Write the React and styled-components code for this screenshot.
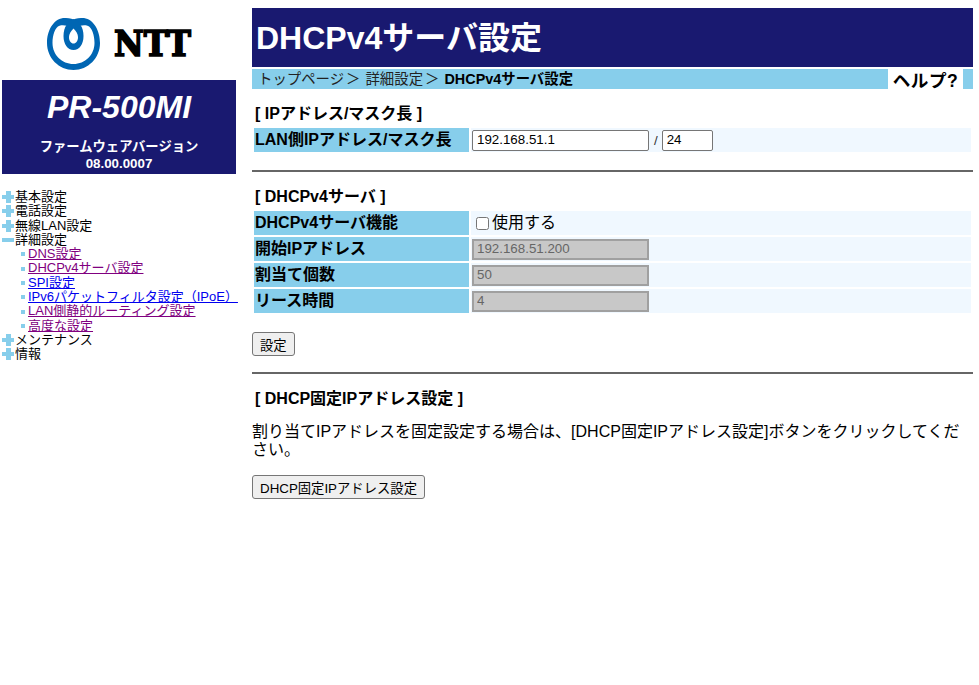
import React from "react";
import styled, { createGlobalStyle } from "styled-components";

const fontStack = `"Liberation Sans", "Noto Sans CJK JP", sans-serif`;

const GlobalStyle = createGlobalStyle`
  html, body {
    margin: 0;
    padding: 0;
    background: #fff;
    font-family: ${fontStack};
    color: #000;
  }
`;

const Page = styled.div`
  display: flex;
  width: 979px;
  min-height: 685px;
  padding-top: 8px;
  box-sizing: border-box;
`;

const Side = styled.aside`
  width: 234px;
  margin-left: 2px;
  flex: none;
`;

const Logo = styled.div`
  height: 72px;
  display: flex;
  align-items: center;
  gap: 13px;
  padding-left: 45px;
`;

const LogoWord = styled.span`
  font-family: "DejaVu Serif", serif;
  font-weight: 900;
  font-size: 32.5px;
  line-height: 1;
  -webkit-text-stroke: 1.6px #000;
  transform: scaleY(1.08);
`;

const ModelBox = styled.div`
  height: 94px;
  background: #191970;
  color: #fff;
  text-align: center;
  font-weight: bold;
`;

const ModelName = styled.div`
  font-size: 32px;
  font-style: italic;
  line-height: 37px;
  padding-top: 9px;
`;

const Firmware = styled.div`
  font-size: 13.33px;
  line-height: 16.5px;
  margin-top: 13px;
`;

const Menu = styled.ul`
  list-style: none;
  margin: 16px 0 0;
  padding: 0;
  font-size: 13px;
  line-height: 14.3px;
`;

const MenuItem = styled.li`
  display: flex;
  align-items: center;
  height: 14.3px;
  white-space: nowrap;
`;

const SubItem = styled(MenuItem)`
  padding-left: 19px;
`;

const Toggle = styled.i`
  position: relative;
  flex: none;
  width: 12px;
  height: 12px;
  margin-right: 1px;

  &::before {
    content: "";
    position: absolute;
    left: 0;
    right: 0;
    top: 4px;
    height: 4px;
    background: #87ceeb;
  }

  &::after {
    content: "";
    display: ${({ $open }) => ($open ? "none" : "block")};
    position: absolute;
    top: 0;
    bottom: 0;
    left: 3.5px;
    width: 5px;
    background: #87ceeb;
  }
`;

const Bullet = styled.i`
  flex: none;
  width: 4px;
  height: 4px;
  margin-right: 3px;
  background: #87ceeb;
`;

const MenuLink = styled.a`
  color: ${({ $visited }) => ($visited ? "#800080" : "#0000ee")};
  text-decoration: underline;
`;

const Main = styled.main`
  width: 721px;
  margin-left: 16px;
  flex: none;
`;

const Title = styled.h1`
  margin: 0;
  height: 59px;
  background: #191970;
  color: #fff;
  font-size: 32px;
  font-weight: bold;
  line-height: 61px;
  padding-left: 4px;
`;

const Crumbs = styled.div`
  display: flex;
  height: 20px;
  margin-top: 2px;
  background: #87ceeb;
  font-size: 14.4px;
  line-height: 20px;
`;

const CrumbText = styled.div`
  flex: 1;
  padding-left: 6px;
  color: #222;

  b {
    color: #000;
  }
`;

const CrumbSep = styled.span`
  margin: 0 5px 0 2px;
`;

const Help = styled.div`
  width: 75px;
  margin-right: 10px;
  background: #fff;
  font-size: 17.6px;
  font-weight: bold;
  text-align: center;
  line-height: 24px;
  letter-spacing: 0.5px;
`;

const SectionTitle = styled.h2`
  height: 20px;
  margin: 14px 0 0;
  padding-left: 3px;
  font-size: 16px;
  font-weight: bold;
  line-height: 22px;
`;

const Rows = styled.div`
  display: flex;
  flex-direction: column;
  gap: 2px;
  margin: 5px 2px 0;
`;

const Row = styled.div`
  display: grid;
  grid-template-columns: 215px 1fr;
  gap: 2px;
  height: 24px;
`;

const Label = styled.div`
  background: #87ceeb;
  padding-left: 1px;
  font-size: 16px;
  font-weight: bold;
  line-height: 23px;
`;

const Value = styled.div`
  display: flex;
  align-items: center;
  background: #f0f8ff;
  padding-left: 1px;
  font-size: 16px;
`;

const TextBox = styled.input`
  box-sizing: border-box;
  width: ${({ $w }) => $w}px;
  height: 21px;
  padding: 0 4px 2px;
  border: 1px solid #767676;
  border-radius: 2px;
  background: #fff;
  color: #000;
  font: 13.33px ${fontStack};
  outline: none;
`;

const DisabledBox = styled(TextBox)`
  width: 177px;
  padding: 0 3px 2px;
  border: 2px solid #a0a0a0;
  border-radius: 0;
  background: #c8c8c8;
  color: #666;
`;

const Slash = styled.span`
  margin: 0 4px 0 5px;
  font-size: 13.33px;
  color: #333;
`;

const CheckLabel = styled.label`
  display: flex;
  align-items: center;
  line-height: 22px;
  margin-top: -1px;
`;

const Check = styled.input`
  width: 13px;
  height: 13px;
  margin: 1px 3px 0 4px;
`;

const Divider = styled.hr`
  margin: ${({ $top }) => $top}px 0 0;
  border: 0;
  height: 2px;
  background: #666;
`;

const Button = styled.button`
  display: block;
  box-sizing: border-box;
  height: 24px;
  margin-top: ${({ $top }) => $top}px;
  padding: 0 7px;
  border: 1px solid #767676;
  border-radius: 3px;
  background: #efefef;
  color: #000;
  font: 13.33px ${fontStack};
`;

const Note = styled.p`
  margin: 15px 0 0;
  font-size: 16px;
  line-height: 18px;
`;

const NttMark = () => (
  <svg width="54" height="52" viewBox="0 0 54 52" aria-hidden="true">
    <path
      fill="#0066b3"
      d="M26.5 1.5C24 0 20 0 16 0 6 1.5 0 13 0 25c0 15 12 27 26.5 27S53 40 53 25C53 13 47 1.5 37 0c-4 0-8 0-10.5 1.5z"
    />
    <path
      fill="#fff"
      d="M12.5 7.7C8 9 5.5 17 5.5 25c0 12 9.5 21 21 21s21-9 21-21c0-8-2.500-16-7-17.300C37 7 34 7 26.500 10 19 7 16 7 12.500 7.700z"
    />
    <path
      fill="#0066b3"
      d="M26.5 1C21 3 16.5 9 16.500 18c0 8 4 14 10 14s10-6 10-14C36.500 9 32 3 26.500 1z"
    />
    <path
      fill="#fff"
      d="M26.5 10.5C24 13 22 16 22 19c0 4 2 6.500 4.500 6.500S31 23 31 19c0-3-2-6-4.500-8.500z"
    />
  </svg>
);

const topItem = (label, open) => (
  <MenuItem key={label}>
    <Toggle $open={open} />
    {label}
  </MenuItem>
);

const subItem = (label, visited) => (
  <SubItem key={label}>
    <Bullet />
    <MenuLink href="#" $visited={visited}>
      {label}
    </MenuLink>
  </SubItem>
);

const App = () => (
  <Page>
    <GlobalStyle />
    <Side>
      <Logo>
        <NttMark />
        <LogoWord>NTT</LogoWord>
      </Logo>
      <ModelBox>
        <ModelName>PR-500MI</ModelName>
        <Firmware>
          ファームウェアバージョン
          <br />
          08.00.0007
        </Firmware>
      </ModelBox>
      <Menu>
        {topItem("基本設定")}
        {topItem("電話設定")}
        {topItem("無線LAN設定")}
        {topItem("詳細設定", true)}
        {subItem("DNS設定", true)}
        {subItem("DHCPv4サーバ設定", true)}
        {subItem("SPI設定")}
        {subItem("IPv6パケットフィルタ設定（IPoE）")}
        {subItem("LAN側静的ルーティング設定", true)}
        {subItem("高度な設定", true)}
        {topItem("メンテナンス")}
        {topItem("情報")}
      </Menu>
    </Side>
    <Main>
      <Title>DHCPv4サーバ設定</Title>
      <Crumbs>
        <CrumbText>
          トップページ<CrumbSep>＞</CrumbSep>詳細設定<CrumbSep>＞</CrumbSep>
          <b>DHCPv4サーバ設定</b>
        </CrumbText>
        <Help>ヘルプ?</Help>
      </Crumbs>

      <SectionTitle>[ IPアドレス/マスク長 ]</SectionTitle>
      <Rows>
        <Row>
          <Label>LAN側IPアドレス/マスク長</Label>
          <Value>
            <TextBox $w={177} defaultValue="192.168.51.1" />
            <Slash>/</Slash>
            <TextBox $w={51} defaultValue="24" />
          </Value>
        </Row>
      </Rows>
      <Divider $top={18} />

      <SectionTitle>[ DHCPv4サーバ ]</SectionTitle>
      <Rows>
        <Row>
          <Label>DHCPv4サーバ機能</Label>
          <Value>
            <CheckLabel>
              <Check type="checkbox" />
              使用する
            </CheckLabel>
          </Value>
        </Row>
        <Row>
          <Label>開始IPアドレス</Label>
          <Value>
            <DisabledBox disabled defaultValue="192.168.51.200" />
          </Value>
        </Row>
        <Row>
          <Label>割当て個数</Label>
          <Value>
            <DisabledBox disabled defaultValue="50" />
          </Value>
        </Row>
        <Row>
          <Label>リース時間</Label>
          <Value>
            <DisabledBox disabled defaultValue="4" />
          </Value>
        </Row>
      </Rows>
      <Button $top={19}>設定</Button>
      <Divider $top={16} />

      <SectionTitle>[ DHCP固定IPアドレス設定 ]</SectionTitle>
      <Note>
        割り当てIPアドレスを固定設定する場合は、[DHCP固定IPアドレス設定]ボタンをクリックしてください。
      </Note>
      <Button $top={16}>DHCP固定IPアドレス設定</Button>
    </Main>
  </Page>
);

export default App;
